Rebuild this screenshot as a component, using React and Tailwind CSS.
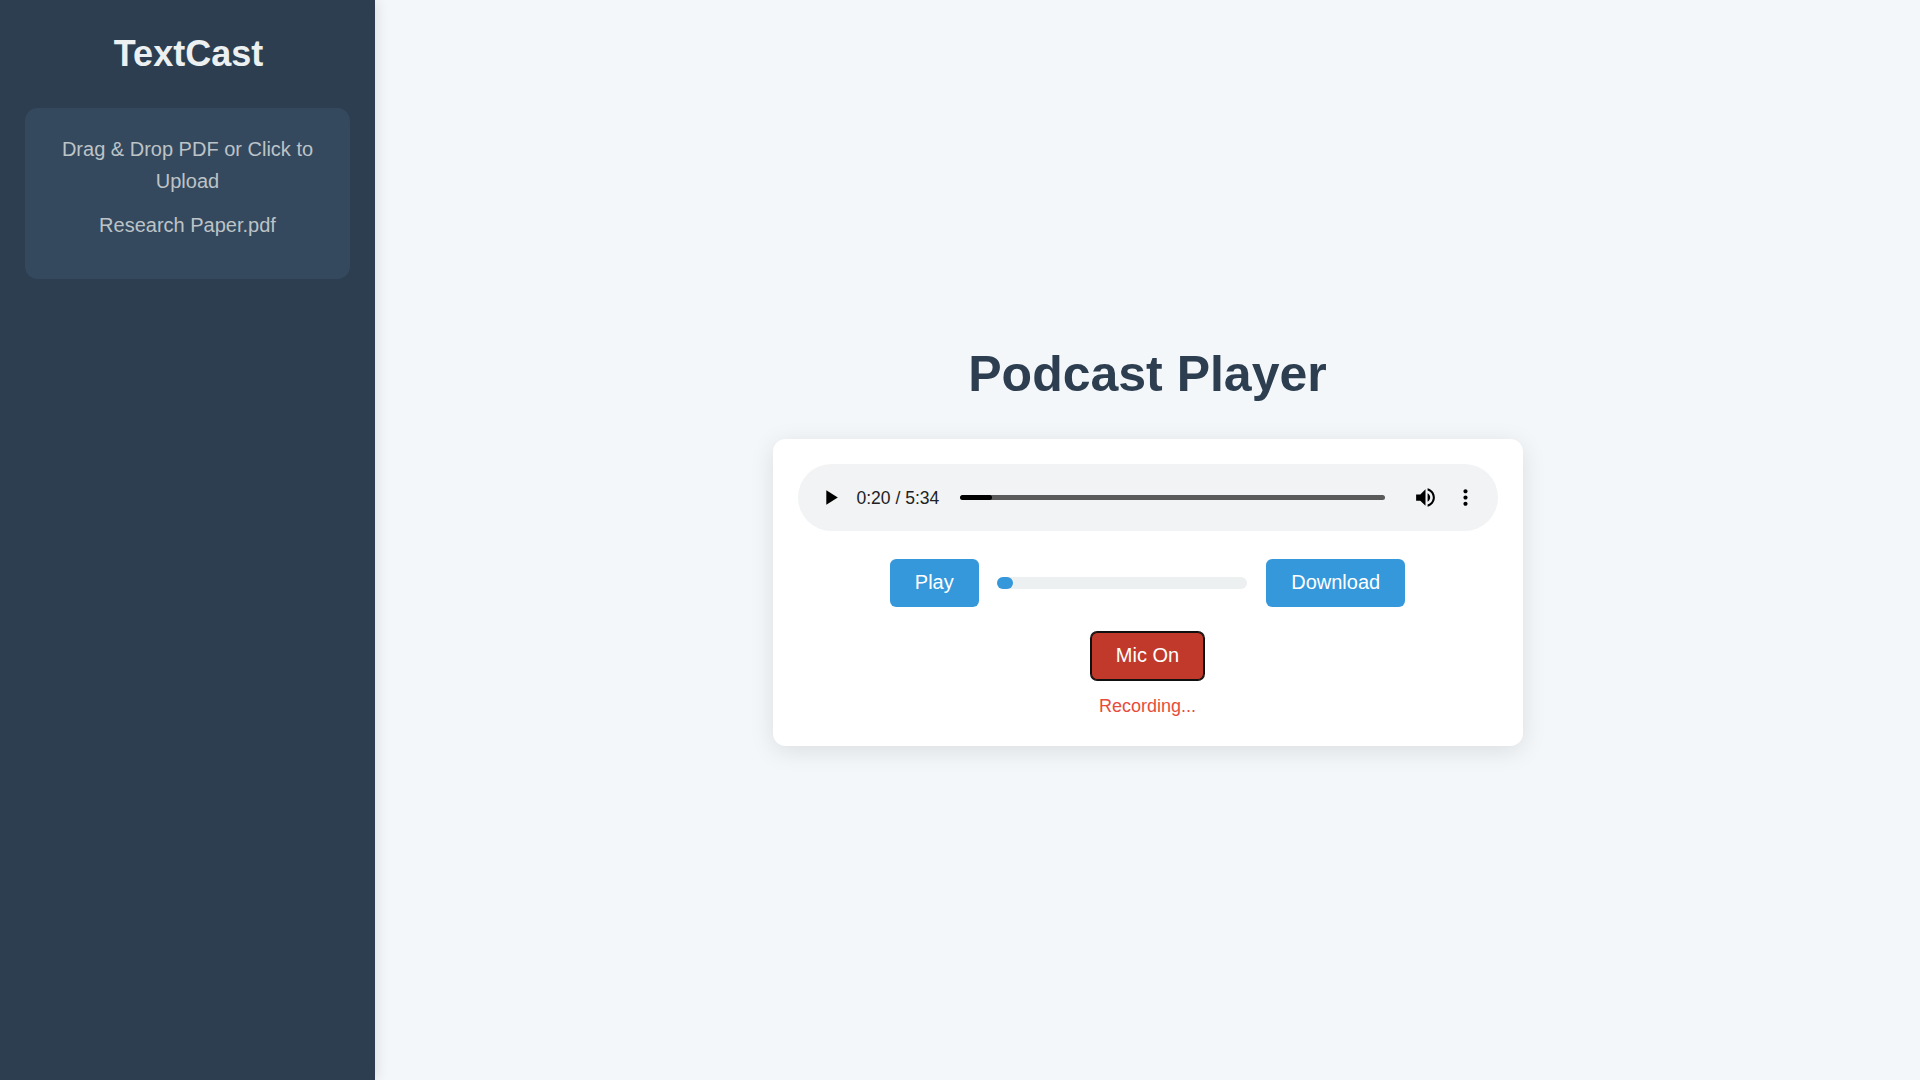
const timeText = "0:20 / 5:34";

function PlayIcon() {
  return (
    <svg className="block size-[25px]" viewBox="0 0 24 24" fill="#000">
      <path d="M8 5v14l11-7z" />
    </svg>
  );
}

function VolumeIcon() {
  return (
    <svg className="block size-[25px]" viewBox="0 0 24 24" fill="#000">
      <path d="M3 9v6h4l5 5V4L7 9H3zm13.5 3c0-1.77-1.02-3.29-2.5-4.03v8.05c1.48-.73 2.5-2.25 2.5-4.02zM14 3.23v2.06c2.89.86 5 3.54 5 6.71s-2.11 5.85-5 6.71v2.06c4.01-.91 7-4.49 7-8.77s-2.99-7.86-7-8.77z" />
    </svg>
  );
}

function MoreIcon() {
  return (
    <svg className="block size-[25px]" viewBox="0 0 24 24" fill="#000">
      <path d="M12 8c1.1 0 2-.9 2-2s-.9-2-2-2-2 .9-2 2 .9 2 2 2zm0 2c-1.1 0-2 .9-2 2s.9 2 2 2 2-.9 2-2-.9-2-2-2zm0 6c-1.1 0-2 .9-2 2s.9 2 2 2 2-.9 2-2-.9-2-2-2z" />
    </svg>
  );
}

function AudioBar() {
  return (
    <div className="flex h-[67px] w-full items-center rounded-full bg-[#f1f3f4] pl-5 pr-5">
      <button className="shrink-0"><PlayIcon /></button>
      <span className="ml-[14px] w-[82px] shrink-0 whitespace-nowrap pt-0.5 text-[17.5px] leading-5 text-[#202124]">{timeText}</span>
      <div className="ml-[21px] h-[5px] grow overflow-hidden rounded-full bg-[#5a5a5a]">
        <div className="h-full w-[32px] rounded-full bg-black" />
      </div>
      <button className="ml-[28px] shrink-0"><VolumeIcon /></button>
      <button className="ml-[15px] shrink-0"><MoreIcon /></button>
    </div>
  );
}

export default function App() {
  return (
    <div className="flex h-screen bg-[#f4f7fa] font-['Liberation_Sans',Arial,sans-serif] leading-[1.6]">
      <aside className="relative w-[375px] shrink-0 bg-[#2c3e50] p-[25px] text-center text-[#ecf0f1] shadow-[2px_0_12px_rgba(0,0,0,0.1)]">
        <h1 className="mb-[25px] pl-0.5 text-[36px] font-bold leading-[57.6px]">TextCast</h1>
        <div className="rounded-[12.5px] bg-[#34495e] p-[25px] text-[20px] leading-8 text-[#bdc3c7]">
          <p>Drag &amp; Drop PDF or Click to Upload</p>
          <p className="my-[12.5px]">Research Paper.pdf</p>
        </div>
      </aside>
      <main className="flex grow flex-col items-center justify-center">
        <h2 className="mb-[25px] text-[50px] font-bold leading-[80px] text-[#2c3e50]">Podcast Player</h2>
        <section className="flex w-[750px] flex-col items-center rounded-[12.5px] bg-white p-[25px] shadow-[0_5px_25px_rgba(0,0,0,0.1)]">
          <AudioBar />
          <div className="mt-[28px] flex items-center gap-[18.75px]">
            <button className="h-12 rounded-[6.25px] bg-[#3498db] px-[25px] text-[20px] leading-[23px] text-white">Play</button>
            <div className="h-3 w-[250px] rounded-full bg-[#ecf0f1]">
              <div className="h-full w-4 rounded-full bg-[#3498db]" />
            </div>
            <button className="h-12 rounded-[6.25px] bg-[#3498db] px-[25px] text-[20px] leading-[23px] text-white">Download</button>
          </div>
          <button className="mt-[25px] h-12 rounded-[6.25px] bg-[#c0392b] px-[25px] text-[20px] leading-[23px] text-white shadow-[inset_0_0_0_1px_#101010,0_0_0_1px_#101010]">Mic On</button>
          <p className="mt-[12.5px] text-[18px] leading-[28.8px] text-[#e74c3c]">Recording...</p>
        </section>
      </main>
    </div>
  );
}
